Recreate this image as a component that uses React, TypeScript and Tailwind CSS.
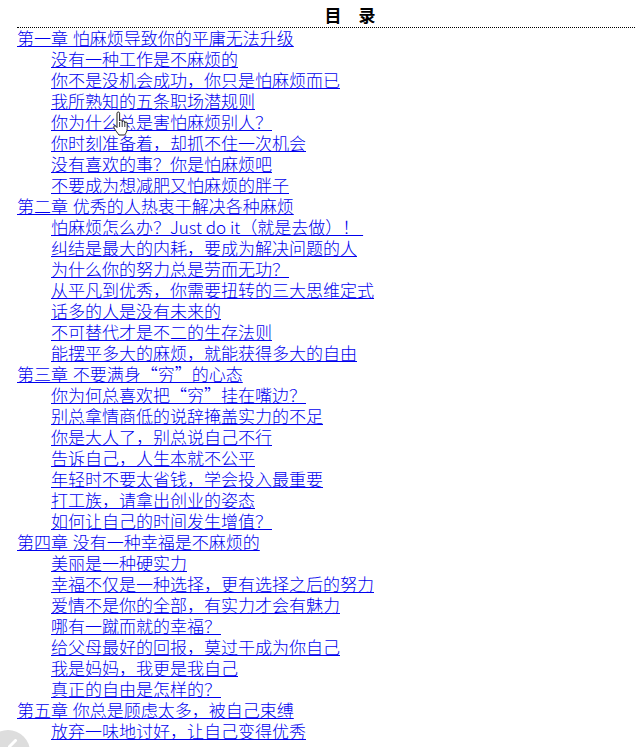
const groups: [string, string[]][] = [
  ["第一章 怕麻烦导致你的平庸无法升级", ["没有一种工作是不麻烦的", "你不是没机会成功\uFF0C你只是怕麻烦而已", "我所熟知的五条职场潜规则", "你为什么总是害怕麻烦别人\uFF1F", "你时刻准备着\uFF0C却抓不住一次机会", "没有喜欢的事\uFF1F你是怕麻烦吧", "不要成为想减肥又怕麻烦的胖子"]],
  ["第二章 优秀的人热衷于解决各种麻烦", ["怕麻烦怎么办\uFF1FJust do it\uFF08就是去做\uFF09\uFF01 ", "纠结是最大的内耗\uFF0C要成为解决问题的人", "为什么你的努力总是劳而无功\uFF1F", "从平凡到优秀\uFF0C你需要扭转的三大思维定式", "话多的人是没有未来的", "不可替代才是不二的生存法则", "能摆平多大的麻烦\uFF0C就能获得多大的自由"]],
  ["第三章 不要满身\u201C穷\u201D的心态", ["你为何总喜欢把\u201C穷\u201D挂在嘴边\uFF1F", "别总拿情商低的说辞掩盖实力的不足", "你是大人了\uFF0C别总说自己不行", "告诉自己\uFF0C人生本就不公平", "年轻时不要太省钱\uFF0C学会投入最重要", "打工族\uFF0C请拿出创业的姿态", "如何让自己的时间发生增值\uFF1F"]],
  ["第四章 没有一种幸福是不麻烦的", ["美丽是一种硬实力", "幸福不仅是一种选择\uFF0C更有选择之后的努力", "爱情不是你的全部\uFF0C有实力才会有魅力", "哪有一蹴而就的幸福\uFF1F", "给父母最好的回报\uFF0C莫过于成为你自己", "我是妈妈\uFF0C我更是我自己", "真正的自由是怎样的\uFF1F"]],
  ["第五章 你总是顾虑太多\uFF0C被自己束缚", ["放弃一味地讨好\uFF0C让自己变得优秀"]],
];

export default function App() {
  return (
    <div className="relative h-[747px] w-[636px] overflow-hidden bg-white font-['Noto_Sans_CJK_SC','Noto_Sans',sans-serif] text-[17px] leading-[21px] font-light">
      <div className="ml-[17px] w-[666px] pt-[3px]">
        <h1 className="h-[25px] border-b border-dotted border-black text-center text-[17px] leading-[24px] font-bold whitespace-pre text-black">{"\u76EE\u3000\u5F55"}</h1>
        <div className="-mt-px flex flex-col">
          {groups.map(([title, items]) => (
            <div key={title} className="flex flex-col">
              <a href="#" className="h-[21px] whitespace-pre text-[#0000ee] underline [word-spacing:1px]">{title}</a>
              {items.map((item) => (
                <a key={item} href="#" className="h-[21px] pl-[34px] whitespace-pre text-[#0000ee] underline">{item}</a>
              ))}
            </div>
          ))}
        </div>
      </div>
      <div className="absolute -bottom-[27px] -left-[14px] h-[44px] w-[44px] rounded-full bg-[#dddddd]" />
      <svg className="absolute bottom-0 left-[8px]" width="10" height="8" viewBox="0 0 10 8">
        <path d="M1 8 7.500 1.500" stroke="#fff" strokeWidth="3" strokeLinecap="round" />
      </svg>
      <svg className="absolute left-[112px] top-[111px]" width="20" height="26" viewBox="0 0 20 26">
        <path d="M5 2.2c0-1.6 2.6-1.600 2.600 0V10c0-1.500 2.600-1.500 2.600 0v1c0-1.400 2.600-1.400 2.600 0v1c0-1.300 2.400-1.300 2.400 0v5.500c0 3-1.500 5-2.500 6.500H7c-1.500-2-3-4-5-7-1-1.500.8-3 2-1.800L5 16.500Z" fill="#fff" stroke="#222" strokeWidth="1" strokeLinejoin="round" />
        <path d="M7.600 11v5M10.200 11v5M12.800 12v4" stroke="#222" strokeWidth="0.900" />
      </svg>
    </div>
  );
}
